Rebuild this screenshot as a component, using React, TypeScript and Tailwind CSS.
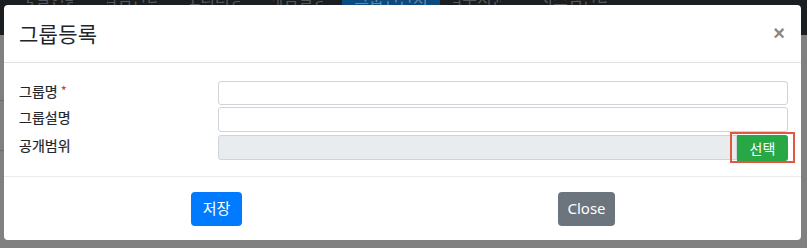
import React from "react";

const KR = { fontFamily: '"Noto Sans CJK KR", "Noto Sans", sans-serif' };

const navItems = [
  { x: 27, w: 46, t: "품질현황", active: false },
  { x: 107, w: 50, t: "입점관리", active: false },
  { x: 190, w: 50, t: "모니터링", active: false },
  { x: 273, w: 50, t: "게임설정", active: false },
  { x: 342, w: 98, t: "그룹연관처", active: true },
  { x: 453, w: 48, t: "업무지원", active: false },
  { x: 543, w: 64, t: "시스템관리", active: false },
];

export default function App() {
  return (
    <div className="relative w-[807px] h-[248px] overflow-hidden bg-[#808080]" style={KR}>
      {/* page behind the backdrop */}
      <div className="relative h-[35px] bg-[#1b1e21]">
        {navItems.map((n) => (
          <div
            key={n.t}
            className={`absolute top-0 h-[35px] overflow-hidden ${n.active ? "bg-[#0b4a80]" : ""}`}
            style={{ left: n.x, width: n.w }}
          >
            <span className={`absolute left-1/2 -translate-x-1/2 top-[-14px] whitespace-nowrap text-[16px] ${n.active ? "text-[#6f859b]" : "text-[#55585b]"}`}>
              {n.t}
            </span>
          </div>
        ))}
      </div>
      <div className="absolute left-0 top-[100px] w-[4px] h-[1px] bg-[#6e6e6e]" />
      <div className="absolute left-0 top-[150px] w-[4px] h-[1px] bg-[#6e6e6e]" />

      {/* modal */}
      <div className="absolute left-[4px] top-[5px] w-[797px] h-[235px] bg-white rounded-[4px] flex flex-col">
        {/* header */}
        <div className="h-[58px] flex items-center justify-between pl-[15px] pr-[16px] border-b border-[#dee2e6]">
          <div className="text-[21px] leading-none text-[#212529] tracking-[0.3px]">그룹등록</div>
          <div className="text-[20px] leading-none font-bold text-[#888888] mt-[-2px]" style={{ fontFamily: '"Liberation Sans", sans-serif' }}>×</div>
        </div>

        {/* body */}
        <div className="h-[113px] pt-[18px] pl-[15px] pr-[13px] flex flex-col">
          <div className="flex items-center h-[24px]">
            <div className="w-[199px] text-[14px] text-[#212529] [-webkit-text-stroke:0.2px_#212529] -mt-[4px]">
              그룹명 <span className="text-[#dc3545] text-[13px] align-top [-webkit-text-stroke:0px]">*</span>
            </div>
            <div className="flex-1 h-full border border-[#ced4da] rounded-[3px] bg-white" />
          </div>
          <div className="flex items-center h-[25px] mt-[2px]">
            <div className="w-[199px] text-[14px] text-[#212529] [-webkit-text-stroke:0.2px_#212529] -mt-[4px]">그룹설명</div>
            <div className="flex-1 h-full border border-[#ced4da] rounded-[3px] bg-white" />
          </div>
          <div className="flex items-center h-[25px] mt-[3px]">
            <div className="w-[199px] text-[14px] text-[#212529] [-webkit-text-stroke:0.2px_#212529] -mt-[4px]">공개범위</div>
            <div className="flex-1 h-full flex">
              <div className="flex-1 h-full border border-[#ced4da] rounded-l-[3px] bg-[#e9ecef]" />
              <div className="relative w-[51px] h-[26px]">
                <div className="w-full h-full bg-[#28a745] rounded-r-[3px] flex items-center justify-center text-white text-[14px]">선택</div>
                <div className="absolute left-[-7px] top-[-3px] w-[65px] h-[31px] border-2 border-[#e0583f]" />
              </div>
            </div>
          </div>
        </div>

        {/* footer */}
        <div className="flex-1 border-t border-[#e9ecef] flex items-center pl-[187px]">
          <div className="w-[51px] h-[34px] rounded-[4px] bg-[#007bff] text-white text-[15px] flex items-center justify-center">저장</div>
          <div className="ml-[316px] w-[57px] h-[34px] rounded-[4px] bg-[#6c757d] text-white text-[15px] flex items-center justify-center" style={{ fontFamily: '"Noto Sans", sans-serif' }}>Close</div>
        </div>
      </div>
    </div>
  );
}
